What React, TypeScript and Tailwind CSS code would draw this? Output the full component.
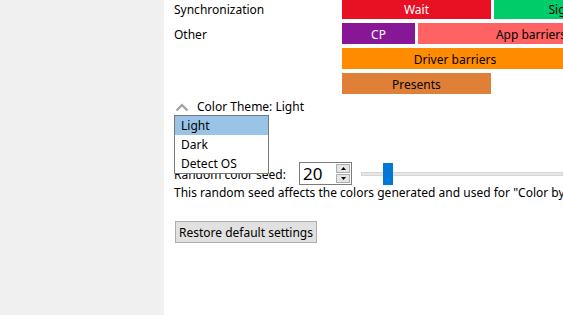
import React from 'react';

const font = { fontFamily: '"Noto Sans", "Liberation Sans", sans-serif' };

function Block({ w, bg, fg, label }: { w: string; bg: string; fg: string; label: string }) {
  return (
    <div className={`${w} ${bg} ${fg} h-[21px] shrink-0 flex items-center justify-center pt-[2px] text-[12px] whitespace-nowrap`}>
      {label}
    </div>
  );
}

export default function App() {
  return (
    <div className="w-[563px] h-[315px] flex overflow-hidden bg-white text-[#000] text-[12px]" style={font}>
      <div className="w-[164px] shrink-0 bg-[#f0f0f0]" />
      <div className="flex-1 relative pl-[10px] overflow-hidden">
        <div className="grid grid-cols-[168px_1fr] gap-y-[4px] -mt-[2px]">
          <div className="h-[21px] flex items-center pt-[3px]">Synchronization</div>
          <div className="flex gap-[3px]">
            <Block w="w-[149px]" bg="bg-[#e81123]" fg="text-white" label="Wait" />
            <Block w="w-[149px]" bg="bg-[#00cc6a]" fg="text-black" label="Signals" />
          </div>
          <div className="h-[21px] flex items-center pt-[2px]">Other</div>
          <div className="flex gap-[3px]">
            <Block w="w-[73px]" bg="bg-[#881798]" fg="text-white" label="CP" />
            <Block w="w-[226px]" bg="bg-[#ff6262]" fg="text-black" label="App barriers" />
          </div>
          <div />
          <div className="flex">
            <Block w="w-[226px]" bg="bg-[#ff8c00]" fg="text-black" label="Driver barriers" />
          </div>
          <div />
          <div className="flex">
            <Block w="w-[149px]" bg="bg-[#e08038]" fg="text-black" label="Presents" />
          </div>
        </div>

        <div className="mt-[5px] h-[16px] flex items-center gap-[8px] pl-[1px]">
          <svg width="14" height="9" viewBox="0 0 14 9">
            <polyline points="1.5,7.5 7,2 12.5,7.5" fill="none" stroke="#a0a0a0" strokeWidth="2.2" />
          </svg>
          <span>Color Theme: Light</span>
        </div>

        <div className="h-[47px]" />

        <div className="flex items-center h-[23px]">
          <span className="w-[125px] pt-[2px]">Random color seed:</span>
          <div className="w-[53px] h-[23px] border border-[#7a7a7a] flex items-center justify-between pl-[3px] pr-[1px]">
            <span className="text-[17px] leading-none">20</span>
            <div className="flex flex-col gap-[1px]">
              <div className="w-[14px] h-[9px] bg-[#e5e5e5] border border-[#adadad] flex items-center justify-center">
                <svg width="5" height="3" viewBox="0 0 5 3"><polygon points="0,3 2.5,0 5,3" fill="#000" /></svg>
              </div>
              <div className="w-[14px] h-[9px] bg-[#e5e5e5] border border-[#adadad] flex items-center justify-center">
                <svg width="5" height="3" viewBox="0 0 5 3"><polygon points="0,0 2.5,3 5,0" fill="#000" /></svg>
              </div>
            </div>
          </div>
          <div className="relative ml-[9px] flex-1 h-[22px] flex items-center">
            <div className="w-full h-[4px] bg-[#e7e7e7] border border-[#d6d6d6]" />
            <div className="absolute left-[22px] top-0 w-[10px] h-[22px] bg-[#0078d7]" />
          </div>
        </div>

        <div className="h-[16px] flex items-center whitespace-nowrap">This random seed affects the colors generated and used for "Color by thread" mode.</div>

        <button className="block mt-[20px] ml-[1px] h-[22px] px-[3px] pt-[1px] bg-[#e1e1e1] border border-[#adadad] text-[12px] leading-none">
          Restore default settings
        </button>

        <div className="absolute left-[10px] top-[115px] w-[95px] h-[59px] bg-white border border-[#7a7a7a] flex flex-col">
          <div className="h-[19px] bg-[#99c4e8] pl-[6px] flex items-center">Light</div>
          <div className="h-[19px] pl-[6px] flex items-center">Dark</div>
          <div className="h-[19px] pl-[6px] flex items-center">Detect OS</div>
        </div>
      </div>
    </div>
  );
}
